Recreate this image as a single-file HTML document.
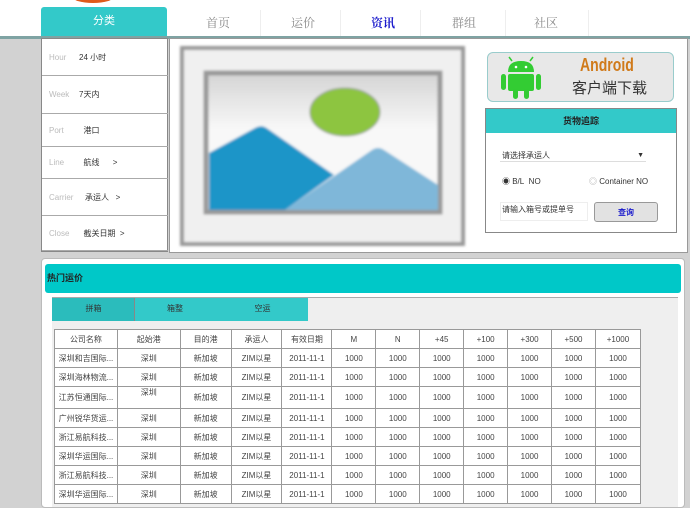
<!DOCTYPE html>
<html><head><meta charset="utf-8"><style>
*{margin:0;padding:0;box-sizing:border-box}
body{width:690px;height:497px;overflow:hidden;background:#d2d2d2;font-family:"Liberation Sans","Noto Sans CJK SC",sans-serif;position:relative;font-size:9px;color:#333}
.a{position:absolute}
.nav{top:14px;font-size:12px;color:#888;font-family:"Liberation Serif","Noto Serif CJK SC",serif}
.menu div{position:absolute;left:0;width:126px;border-bottom:1px solid #aaa;font-size:8px;padding-left:7px;display:flex;align-items:center}
.menu b{font-weight:normal;color:#bbb;width:30px;display:inline-block}
table{border-collapse:collapse;font-size:8px;color:#444;background:#fff}
td{border:1px solid #999;text-align:center;padding:0;height:19px}
</style></head><body>
<div class="a" style="left:0;top:0;width:690px;height:37px;background:#fff"></div>
<div class="a" style="left:72px;top:-10px;width:42px;height:13px;border-radius:50%;background:#e05a1a"></div>
<div class="a" style="left:41px;top:7px;width:126px;height:31px;background:#33c9c9;border-radius:3px 3px 0 0;color:#fff;font-size:11px;text-align:center;line-height:28px">分类</div>
<div class="a nav" style="left:206px">首页</div>
<div class="a nav" style="left:291px">运价</div>
<div class="a nav" style="left:371px;color:#1a1acc;font-weight:bold">资讯</div>
<div class="a nav" style="left:452px">群组</div>
<div class="a nav" style="left:534px">社区</div>
<div class="a" style="left:260px;top:10px;width:1px;height:26px;background:#eee"></div>
<div class="a" style="left:340px;top:10px;width:1px;height:26px;background:#eee"></div>
<div class="a" style="left:420px;top:10px;width:1px;height:26px;background:#eee"></div>
<div class="a" style="left:505px;top:10px;width:1px;height:26px;background:#eee"></div>
<div class="a" style="left:588px;top:10px;width:1px;height:26px;background:#eee"></div>
<div class="a" style="left:0;top:36px;width:690px;height:3px;background:#7fa3a3"></div>
<div class="a menu" style="left:41px;top:38px;width:127px;height:214px;background:#fff;border:1px solid #888">
<div style="top:0;height:37px"><b>Hour</b>24 小时</div>
<div style="top:37px;height:38px"><b>Week</b>7天内</div>
<div style="top:75px;height:33px"><b>Port</b>&nbsp;&nbsp;港口</div>
<div style="top:108px;height:32px"><b>Line</b>&nbsp;&nbsp;航线&nbsp;&nbsp;&nbsp;&nbsp;&nbsp;&nbsp;&gt;</div>
<div style="top:140px;height:37px"><b style="width:36px">Carrier</b>承运人&nbsp;&nbsp;&nbsp;&gt;</div>
<div style="top:177px;height:35px"><b>Close</b>&nbsp;&nbsp;截关日期&nbsp;&nbsp;&gt;</div>
</div>
<div class="a" style="left:169px;top:38px;width:519px;height:215px;background:#fff;border:1px solid #999"></div>
<svg class="a" style="left:0;top:0" width="690" height="260">
<defs><linearGradient id="g" x1="0" y1="0" x2="0" y2="1"><stop offset="0" stop-color="#d4d4d4"/><stop offset=".4" stop-color="#f8f8f8"/></linearGradient>
<filter id="b"><feGaussianBlur stdDeviation="1.2"/></filter></defs>
<g filter="url(#b)">
<rect x="182" y="48" width="281" height="196" fill="#f0f0f0" stroke="#999" stroke-width="4"/>
<rect x="206" y="73" width="234" height="139" fill="url(#g)" stroke="#9a9a9a" stroke-width="5"/>
<ellipse cx="345" cy="112" rx="35" ry="24" fill="#8dc540" stroke="#999" stroke-width="1"/>
<path d="M209 153 L255 128 Q262 124 268 129 L334 175 L285 210 L209 210Z" fill="#1b95c8"/>
<path d="M285 210 L372 150 Q378 146 384 150 L438 185 L438 210Z" fill="#7fb7d9"/>
</g>
</svg>
<div class="a" style="left:487px;top:52px;width:187px;height:50px;background:#e8e8e8;border:1px solid #9cc;border-radius:6px"></div>
<svg class="a" style="left:500px;top:55px" width="44" height="46"><path d="M12 6 L9 2 M30 6 L33 2" stroke="#3c3" stroke-width="1.5"/><path d="M8 17 Q8 6 21 6 Q34 6 34 17Z" fill="#3c3"/><rect x="8" y="19" width="26" height="17" rx="2" fill="#3c3"/><rect x="1" y="19" width="5" height="16" rx="2.5" fill="#3c3"/><rect x="36" y="19" width="5" height="16" rx="2.5" fill="#3c3"/><rect x="13" y="34" width="5" height="10" rx="2.5" fill="#3c3"/><rect x="24" y="34" width="5" height="10" rx="2.5" fill="#3c3"/><circle cx="16" cy="12" r="1.3" fill="#fff"/><circle cx="26" cy="12" r="1.3" fill="#fff"/></svg>
<div class="a" style="left:580px;top:55px;font-size:18px;font-weight:bold;color:#d07a1a;transform:scaleX(.78);transform-origin:0 0;letter-spacing:0">Android</div>
<div class="a" style="left:572px;top:77px;font-size:15px;color:#333">客户端下载</div>
<div class="a" style="left:485px;top:108px;width:192px;height:125px;background:#fff;border:1px solid #888"></div>
<div class="a" style="left:486px;top:109px;width:190px;height:24px;background:#33c9c9;text-align:center;font-size:9px;font-weight:bold;line-height:24px;color:#222">货物追踪</div>
<div class="a" style="left:500px;top:149px;width:146px;height:13px;border-bottom:1px solid #ddd;font-size:8px;line-height:13px;padding-left:2px">请选择承运人<span style="float:right;font-size:7px;padding-right:2px">▼</span></div>
<div class="a" style="left:502px;top:176px;font-size:8px;color:#333">◉ B/L&nbsp;&nbsp;NO</div>
<div class="a" style="left:589px;top:176px;font-size:8px;color:#333"><span style="color:#aaa">◎</span> Container NO</div>
<div class="a" style="left:500px;top:202px;width:88px;height:19px;border:1px solid #eee;font-size:8px;padding:1px">请输入箱号或提单号</div>
<div class="a" style="left:594px;top:202px;width:64px;height:20px;background:#e2e2e2;border:1px solid #999;border-radius:3px;text-align:center;line-height:19px;color:#1a1acc;font-weight:bold;font-size:8px">查询</div>
<div class="a" style="left:41px;top:258px;width:644px;height:250px;background:#fff;border:1px solid #bbb;border-radius:4px"></div>
<div class="a" style="left:45px;top:264px;width:636px;height:29px;background:#00c8c8;border-radius:3px;font-size:9px;font-weight:bold;line-height:28px;padding-left:2px;color:#222">热门运价</div>
<div class="a" style="left:52px;top:297px;width:626px;height:210px;background:#efefef;border-top:1px solid #aaa"></div>
<div class="a" style="left:52px;top:298px;width:256px;height:23px;background:#33c9c9"></div>
<div class="a" style="left:52px;top:298px;width:83px;height:23px;background:#2bbcbc;border-right:1px solid #888"></div>
<div class="a" style="left:52px;top:303px;width:83px;text-align:center;font-size:8px;color:#333">拼箱</div>
<div class="a" style="left:135px;top:303px;width:80px;text-align:center;font-size:8px;color:#333">箱整</div>
<div class="a" style="left:220px;top:303px;width:85px;text-align:center;font-size:8px;color:#333">空运</div>
<table class="a" style="left:54px;top:329px;width:587px">
<colgroup><col style="width:63px"><col style="width:63px"><col style="width:51px"><col style="width:51px"><col style="width:50px"><col style="width:44px"><col style="width:44px"><col style="width:44px"><col style="width:44px"><col style="width:44px"><col style="width:44px"><col style="width:45px"></colgroup>
<tr><td>公司名称</td><td>起始港</td><td>目的港</td><td>承运人</td><td>有效日期</td><td>M</td><td>N</td><td>+45</td><td>+100</td><td>+300</td><td>+500</td><td>+1000</td></tr>
<tr><td>深圳和吉国际...</td><td>深圳</td><td>新加坡</td><td>ZIM以星</td><td>2011-11-1</td><td>1000</td><td>1000</td><td>1000</td><td>1000</td><td>1000</td><td>1000</td><td>1000</td></tr>
<tr><td>深圳海林物流...</td><td>深圳</td><td>新加坡</td><td>ZIM以星</td><td>2011-11-1</td><td>1000</td><td>1000</td><td>1000</td><td>1000</td><td>1000</td><td>1000</td><td>1000</td></tr>
<tr><td style="height:22px">江苏恒通国际...</td><td style="vertical-align:top">深圳</td><td>新加坡</td><td>ZIM以星</td><td>2011-11-1</td><td>1000</td><td>1000</td><td>1000</td><td>1000</td><td>1000</td><td>1000</td><td>1000</td></tr>
<tr><td>广州锐华货运...</td><td>深圳</td><td>新加坡</td><td>ZIM以星</td><td>2011-11-1</td><td>1000</td><td>1000</td><td>1000</td><td>1000</td><td>1000</td><td>1000</td><td>1000</td></tr>
<tr><td>浙江易航科技...</td><td>深圳</td><td>新加坡</td><td>ZIM以星</td><td>2011-11-1</td><td>1000</td><td>1000</td><td>1000</td><td>1000</td><td>1000</td><td>1000</td><td>1000</td></tr>
<tr><td>深圳华运国际...</td><td>深圳</td><td>新加坡</td><td>ZIM以星</td><td>2011-11-1</td><td>1000</td><td>1000</td><td>1000</td><td>1000</td><td>1000</td><td>1000</td><td>1000</td></tr>
<tr><td>浙江易航科技...</td><td>深圳</td><td>新加坡</td><td>ZIM以星</td><td>2011-11-1</td><td>1000</td><td>1000</td><td>1000</td><td>1000</td><td>1000</td><td>1000</td><td>1000</td></tr>
<tr><td>深圳华运国际...</td><td>深圳</td><td>新加坡</td><td>ZIM以星</td><td>2011-11-1</td><td>1000</td><td>1000</td><td>1000</td><td>1000</td><td>1000</td><td>1000</td><td>1000</td></tr>
</table>
</body></html>
